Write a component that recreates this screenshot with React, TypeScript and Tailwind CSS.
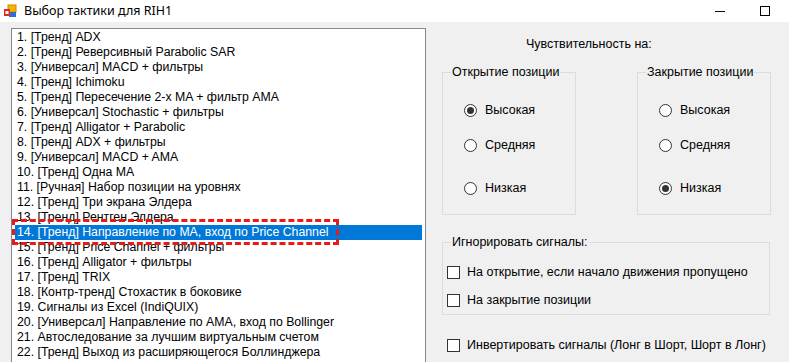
import React from "react"

const strategies = [
  "1. [Тренд] ADX",
  "2. [Тренд] Реверсивный Parabolic SAR",
  "3. [Универсал] MACD + фильтры",
  "4. [Тренд] Ichimoku",
  "5. [Тренд] Пересечение 2-х MA + фильтр AMA",
  "6. [Универсал] Stochastic + фильтры",
  "7. [Тренд] Alligator + Parabolic",
  "8. [Тренд] ADX + фильтры",
  "9. [Универсал] MACD + AMA",
  "10. [Тренд] Одна MA",
  "11. [Ручная] Набор позиции на уровнях",
  "12. [Тренд] Три экрана Элдера",
  "13. [Тренд] Рентген Элдера",
  "14. [Тренд] Направление по MA, вход по Price Channel",
  "15. [Тренд] Price Channel + фильтры",
  "16. [Тренд] Alligator + фильтры",
  "17. [Тренд] TRIX",
  "18. [Контр-тренд] Стохастик в боковике",
  "19. Сигналы из Excel (IndiQUIX)",
  "20. [Универсал] Направление по AMA, вход по Bollinger",
  "21. Автоследование за лучшим виртуальным счетом",
  "22. [Тренд] Выход из расширяющегося Боллинджера",
]

const SELECTED = 13

function AppIcon() {
  return (
    <svg width="14" height="14" viewBox="0 0 14 14">
      <rect x="5" y="1" width="8" height="7" fill="#f4b400" />
      <rect x="5" y="1" width="8" height="7" fill="none" stroke="#c98a00" strokeWidth="1" />
      <rect x="6" y="8" width="7" height="5" fill="#2f6fd0" />
      <rect x="1" y="5" width="6" height="7" fill="#d93025" />
      <rect x="2.5" y="7" width="3" height="3" fill="#fff" />
    </svg>
  )
}

function Radio({ label, checked }: { label: string; checked?: boolean }) {
  return (
    <div className="flex items-center h-[15px]">
      <span className="w-[13px] h-[13px] rounded-full border border-[#333] bg-white flex items-center justify-center">
        {checked && <span className="w-[7px] h-[7px] rounded-full bg-[#333]" />}
      </span>
      <span className="ml-[8px]">{label}</span>
    </div>
  )
}

function Checkbox({ label }: { label: string }) {
  return (
    <div className="flex items-center h-[15px]">
      <span className="w-[13px] h-[13px] border border-[#333] bg-white" />
      <span className="ml-[7px] whitespace-nowrap">{label}</span>
    </div>
  )
}

function SensitivityGroup({ title, selected }: { title: string; selected: number }) {
  return (
    <fieldset className="w-[134px] h-[150px] border border-[#dcdcdc] p-0">
      <legend className="ml-[8px] px-px leading-[15px] whitespace-nowrap">{title}</legend>
      <div className="pl-[21px]">
        <div className="mt-[23px]">
          <Radio label="Высокая" checked={selected === 0} />
        </div>
        <div className="mt-[20px]">
          <Radio label="Средняя" checked={selected === 1} />
        </div>
        <div className="mt-[28px]">
          <Radio label="Низкая" checked={selected === 2} />
        </div>
      </div>
    </fieldset>
  )
}

export default function App() {
  return (
    <div className="w-[789px] h-[362px] overflow-hidden bg-[#f0f0f0] flex flex-col font-['Liberation_Sans',Arial,sans-serif] text-black">
      {/* Title bar */}
      <div className="h-[22px] bg-white flex items-center shrink-0">
        <div className="ml-[3px]">
          <AppIcon />
        </div>
        <span className="ml-[7px] font-['Noto_Sans',sans-serif] text-[12.5px]">Выбор тактики для RIH1</span>
        <div className="ml-auto flex items-center">
          <span className="w-[10px] h-px bg-black" />
          <span className="ml-[35px] mr-[19px] w-[10px] h-[10px] border border-black" />
        </div>
      </div>

      <div className="flex pt-[6px] pl-[11px] leading-[15px]">
        {/* List box */}
        <div className="relative w-[415px] h-[340px] shrink-0 border border-[#828790] bg-white pt-[1px] px-[3px] text-[12.3px]">
          {strategies.map((s, i) => (
            <div
              key={s}
              className={
                i === SELECTED
                  ? "h-[15px] pl-[2px] whitespace-nowrap bg-[#0078d7] text-white"
                  : "h-[15px] pl-[2px] whitespace-nowrap"
              }
            >
              {s}
            </div>
          ))}
          {/* annotation around selected row */}
          <div className="absolute left-0 top-[190px] w-[327px] h-[26px] border-[3px] border-dashed border-[#e8191b]" />
        </div>

        {/* Settings panel */}
        <div className="flex-1 pl-[16px] pt-[9px] text-[12.5px]">
          <div className="pl-[84px]">Чувствительность на:</div>
          <div className="flex gap-[61px] mt-[13px]">
            <SensitivityGroup title="Открытие позиции" selected={0} />
            <SensitivityGroup title="Закрытие позиции" selected={2} />
          </div>
          <fieldset className="w-[328px] h-[80px] mt-[20px] border border-[#dcdcdc] p-0">
            <legend className="ml-[8px] px-px leading-[15px] whitespace-nowrap">Игнорировать сигналы:</legend>
            <div className="pl-[4px]">
              <div className="mt-[15px]">
                <Checkbox label="На открытие, если начало движения пропущено" />
              </div>
              <div className="mt-[13px]">
                <Checkbox label="На закрытие позиции" />
              </div>
            </div>
          </fieldset>
          <div className="mt-[23px] pl-[5px]">
            <Checkbox label="Инвертировать сигналы (Лонг в Шорт, Шорт в Лонг)" />
          </div>
        </div>
      </div>
    </div>
  )
}
